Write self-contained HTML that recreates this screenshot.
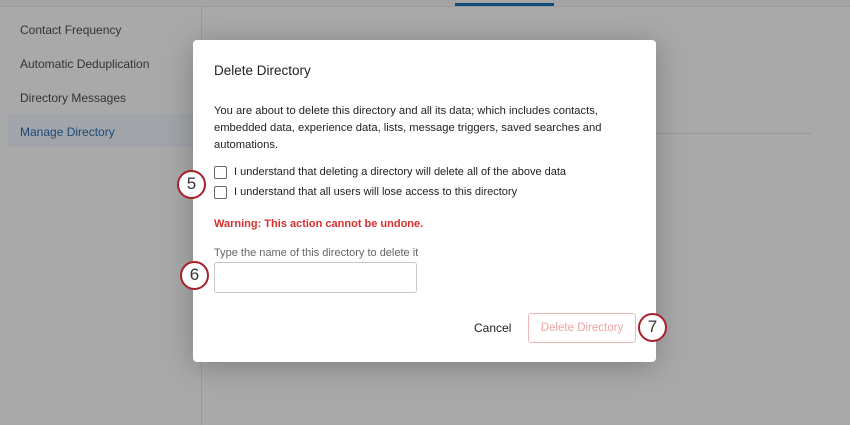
<!DOCTYPE html>
<html><head><style>
*{margin:0;padding:0;box-sizing:border-box}
body{width:850px;height:425px;overflow:hidden;background:#a9a9a9;font-family:"Liberation Sans",sans-serif;position:relative}
.top{position:absolute;left:0;top:0;width:850px;height:7px;background:#a4a4a4;border-bottom:1px solid #9a9a9a}
.tabline{position:absolute;left:455px;top:3px;width:99px;height:3px;background:#0f4c7a}
.side{position:absolute;left:0;top:7px;width:202px;height:418px;border-right:1px solid #9a9a9a;background:#a9a9a9}
.item{position:absolute;left:20px;font-size:12px;color:#333}
.act{position:absolute;left:8px;top:114px;width:194px;height:33px;background:#a1a4a8}
.hline{position:absolute;left:656px;top:133px;width:155px;height:1px;background:#989898}
.m{position:absolute;left:193px;top:40px;width:463px;height:322px;background:#fff;border-radius:4px;box-shadow:0 4px 30px rgba(0,0,0,.25)}
.t{position:absolute;font-size:11px;color:#222}
.cb{position:absolute;left:214px;width:13px;height:13px;border:1.3px solid #666;border-radius:2px;background:#fff}
.c{position:absolute;width:29px;height:29px;border:2.5px solid #a8202a;border-radius:50%;background:#fff;font-size:17px;color:#333;text-align:center;line-height:24px}
</style></head><body>
<div class="top"></div><div class="tabline"></div>
<div class="side"></div>
<div class="act"></div>
<div class="item" style="top:23px">Contact Frequency</div>
<div class="item" style="top:57px">Automatic Deduplication</div>
<div class="item" style="top:91px">Directory Messages</div>
<div class="item" style="top:125px;color:#1b4a78">Manage Directory</div>
<div class="hline"></div>
<div class="m"></div>
<div class="t" style="left:214px;top:63px;font-size:13.5px">Delete Directory</div>
<div class="t" style="left:214px;top:103px;line-height:17px;width:400px;font-size:11.2px">You are about to delete this directory and all its data; which includes contacts, embedded data, experience data, lists, message triggers, saved searches and automations.</div>
<div class="cb" style="top:166px"></div>
<div class="t" style="left:234px;top:166px">I understand that deleting a directory will delete all of the above data</div>
<div class="cb" style="top:186px"></div>
<div class="t" style="left:234px;top:186px">I understand that all users will lose access to this directory</div>
<div class="t" style="left:214px;top:218px;color:#d62f2f;font-weight:bold">Warning: This action cannot be undone.</div>
<div class="t" style="left:214px;top:247px;color:#666">Type the name of this directory to delete it</div>
<div style="position:absolute;left:214px;top:262px;width:203px;height:31px;border:1px solid #c8c8c8;border-radius:3px"></div>
<div class="t" style="left:474px;top:321px;font-size:12px">Cancel</div>
<div style="position:absolute;left:528px;top:313px;width:108px;height:30px;border:1px solid #f0b5b5;border-radius:3px;color:#efa3a3;font-size:11.5px;text-align:center;line-height:28px">Delete Directory</div>
<div class="c" style="left:177px;top:170px">5</div>
<div class="c" style="left:180px;top:261px">6</div>
<div class="c" style="left:638px;top:313px">7</div>
</body></html>
